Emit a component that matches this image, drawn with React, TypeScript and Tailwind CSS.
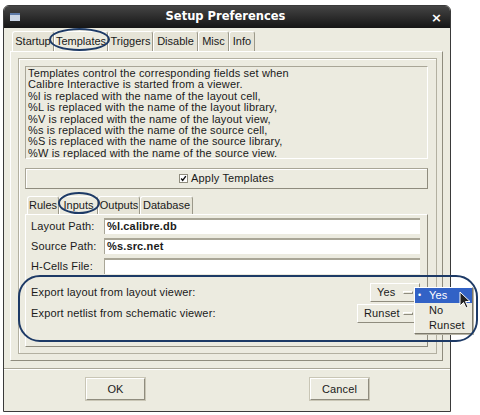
import React from 'react';

const font = { fontFamily: '"Liberation Sans", Arial, sans-serif' };

const topTabs = [
  { label: 'Startup', w: 'w-[42px]' },
  { label: 'Templates', w: 'w-[54px]', active: true },
  { label: 'Triggers', w: 'w-[45px]' },
  { label: 'Disable', w: 'w-[45px]' },
  { label: 'Misc', w: 'w-[31px]' },
  { label: 'Info', w: 'w-[26px]' },
];

const innerTabs = [
  { label: 'Rules', w: 'w-[32px]' },
  { label: 'Inputs', w: 'w-[39px]', active: true },
  { label: 'Outputs', w: 'w-[42px]' },
  { label: 'Database', w: 'w-[53px]' },
];

const helpLines = [
  'Templates control the corresponding fields set when',
  'Calibre Interactive is started from a viewer.',
  '%l is replaced with the name of the layout cell,',
  '%L is replaced with the name of the layout library,',
  '%V is replaced with the name of the layout view,',
  '%s is replaced with the name of the source cell,',
  '%S is replaced with the name of the source library,',
  '%W is replaced with the name of the source view.',
];

const fields = [
  { label: 'Layout Path:', value: '%l.calibre.db' },
  { label: 'Source Path:', value: '%s.src.net' },
  { label: 'H-Cells File:', value: '' },
];

// --- small pieces ---
function Tab({ label, w, active, h }: any) {
  return (
    <div
      className={`${w} ${h} flex items-center justify-center tracking-[0px] border-t border-l border-r border-t-white border-l-white border-r-[#9c998a] rounded-t-[3px] ${active ? 'bg-[#ecebe0]' : 'bg-[#e6e4d7]'}`}
    >
      {label}
    </div>
  );
}

function OptionButton({ label, w }: any) {
  return (
    <div className={`${w} h-[19px] flex items-center pl-[6px] border border-t-white border-l-white border-r-[#8f8c7e] border-b-[#8f8c7e] bg-[#ecebe0]`}>
      <span className="flex-1">{label}</span>
      <span className="w-[10px] h-[3px] mr-[6px] border border-t-white border-l-white border-r-[#8f8c7e] border-b-[#8f8c7e]" />
    </div>
  );
}

function PushButton({ label }: any) {
  return (
    <div className="w-[59px] h-[22px] flex items-center justify-center bg-[#ecebe0] border border-t-white border-l-white border-r-[#8f8c7e] border-b-[#8f8c7e] shadow-[0_0_0_1px_#c9c6b6]">
      {label}
    </div>
  );
}

export default function App() {
  return (
    <div className="relative w-[480px] h-[415px] bg-white pt-[5px] pl-[3px] text-[11px] tracking-[0.15px] text-[#1a1a1a] overflow-hidden" style={font}>
      {/* WINDOW */}
      <div className="w-[448px] h-[407px] flex flex-col border border-[#3a3a3a] rounded-t-[6px] bg-[#ecebe0] overflow-hidden">
        {/* title bar */}
        <div className="h-[22px] shrink-0 flex items-center px-[6px] bg-gradient-to-b from-[#454545] to-[#161616] text-white">
          <div className="w-[10px] h-[8px] bg-[#c9d4e4] border-t-[2px] border-[#5d7aa8]" />
          <div className="flex-1 text-center text-[11.5px] font-bold tracking-[0px]" style={{ fontFamily: '"DejaVu Sans", sans-serif' }}>
            Setup Preferences
          </div>
          <div className="w-[10px] text-[13px] font-bold leading-none mr-[3px]" style={{ fontFamily: '"DejaVu Sans", sans-serif' }}>×</div>
        </div>

        {/* top tabs */}
        <div className="flex mt-[3px] ml-[8px] h-[20px]">
          {topTabs.map((t) => (
            <Tab key={t.label} {...t} h="h-[20px]" />
          ))}
        </div>

        {/* outer tab pane */}
        <div className="ml-[6px] w-[433px] h-[310px] border border-t-white border-l-white border-r-[#8f8c7e] border-b-[#8f8c7e] pl-[7px] pt-[6px]">
          <div className="w-[419px] h-[296px] border border-[#b3b0a1] shadow-[inset_1px_1px_0_#fff] pl-[6px] pt-[7px]">
            {/* help text */}
            <div className="w-[403px] h-[93px] border border-t-[#a9a697] border-l-[#a9a697] border-r-white border-b-white pl-[2px] pt-[1px] leading-[11.4px] whitespace-pre">
              {helpLines.map((l) => (
                <div key={l}>{l}</div>
              ))}
            </div>

            {/* apply templates */}
            <div className="w-[403px] h-[21px] mt-[9px] border border-t-[#a9a697] border-l-[#a9a697] border-r-[#8f8c7e] border-b-[#8f8c7e] shadow-[inset_1px_1px_0_#fff] flex items-center justify-center">
              <span className="w-[9px] h-[9px] mr-[3px] border border-[#8f8c7e] bg-white flex items-center justify-center">
                <svg viewBox="0 0 9 9" className="w-[9px] h-[9px]">
                  <path d="M1.5 4.5 L3.5 7 L7.5 1.5" stroke="#111" strokeWidth="1.8" fill="none" />
                </svg>
              </span>
              Apply Templates
            </div>

            {/* inner tabs */}
            <div className="flex mt-[7px] ml-[2px] h-[18px]">
              {innerTabs.map((t) => (
                <Tab key={t.label} {...t} h="h-[18px]" />
              ))}
            </div>

            {/* inner pane */}
            <div className="w-[403px] h-[133px] border border-t-white border-l-white border-r-[#8f8c7e] border-b-[#8f8c7e] pt-[3px] pr-[7px]">
              <div className="flex flex-col gap-[4px]">
                {fields.map((f) => (
                  <div key={f.label} className="flex items-center h-[16px]">
                    <span className="w-[78px] pl-[5px]">{f.label}</span>
                    <div className="flex-1 h-[16px] bg-white border-t-[2px] border-l border-[#a9a697] pl-[2px] font-bold leading-[13px]">
                      {f.value}
                    </div>
                  </div>
                ))}
              </div>

              <div className="flex items-center mt-[9px] h-[19px]">
                <span className="flex-1 pl-[5px]">Export layout from layout viewer:</span>
                <OptionButton label="Yes" w="w-[50px]" />
              </div>
              <div className="flex items-center mt-[2px] h-[19px]">
                <span className="flex-1 pl-[5px]">Export netlist from schematic viewer:</span>
                <OptionButton label="Runset" w="w-[63px]" />
              </div>
            </div>
          </div>
        </div>

        {/* separator */}
        <div className="mt-[7px] border-t border-t-[#a9a697] border-b border-b-white" />

        {/* buttons */}
        <div className="flex mt-[8px]">
          <div className="ml-[82px]">
            <PushButton label="OK" />
          </div>
          <div className="ml-[165px]">
            <PushButton label="Cancel" />
          </div>
        </div>
      </div>

      {/* POPUP MENU */}
      <div className="absolute left-[414px] top-[287px] w-[59px] h-[47px] bg-[#ecebe0] border border-t-white border-l-white border-r-[#7c796c] border-b-[#7c796c] shadow-[1px_1px_0_#b8b5a6]">
        <div className="h-[15px] bg-[#3262c6] text-white flex items-center pl-[3px]">
          <span className="w-[11px] text-[9px]">•</span>Yes
        </div>
        <div className="h-[15px] flex items-center pl-[14px]">No</div>
        <div className="h-[15px] flex items-center pl-[14px]">Runset</div>
      </div>

      {/* cursor */}
      <svg className="absolute left-[459px] top-[291px]" width="13" height="19" viewBox="0 0 13 19">
        <path d="M1 1 L1 15 L4.5 11.5 L7 17 L9 16 L6.5 10.5 L11 10.5 Z" fill="#222" stroke="#fff" strokeWidth="1" />
      </svg>

      {/* annotation outlines */}
      <div className="absolute left-[49px] top-[28px] w-[61px] h-[23px] rounded-[50%] border-[2px] border-[#1d3a66]" />
      <div className="absolute left-[58px] top-[192px] w-[42px] h-[22px] rounded-[50%] border-[2px] border-[#1d3a66]" />
      <div className="absolute left-[18px] top-[275px] w-[460px] h-[67px] rounded-[22px] border-[2.5px] border-[#1d3a66]" />
    </div>
  );
}
